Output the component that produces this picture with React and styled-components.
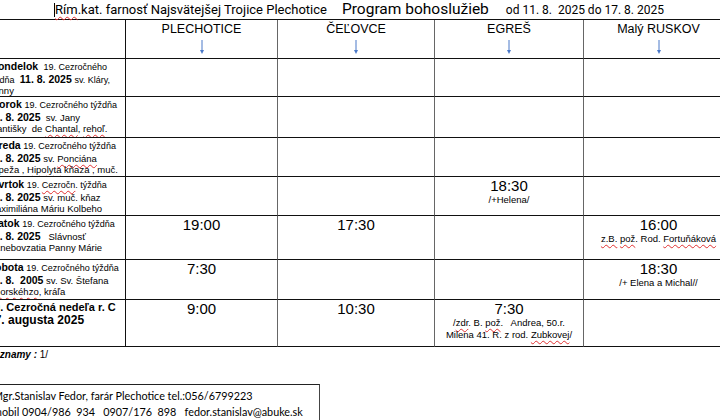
import React from 'react';
import styled, { createGlobalStyle } from 'styled-components';

const Global = createGlobalStyle`
  html, body { margin: 0; padding: 0; background: #fff; }
`;

const Page = styled.div`
  width: 720px;
  height: 420px;
  overflow: hidden;
  background: #fff;
  color: #000;
  font-family: "Liberation Sans", Arial, sans-serif;
`;

const TitleBar = styled.div`
  display: flex;
  align-items: baseline;
  height: 19px;
  padding-left: 54px;
  white-space: nowrap;
  font-family: Roboto, "Liberation Sans", sans-serif;
`;

const Parish = styled.span`
  font-size: 13px;
  border-left: 1px solid #000;
  line-height: 14px;
`;

const Program = styled.span`
  font-size: 15.5px;
  margin-left: 15px;
`;

const Dates = styled.span`
  font-size: 12px;
  margin-left: 17px;
`;

const Spell = styled.span`
  text-decoration: underline wavy #e03030;
  text-decoration-thickness: 1px;
  text-underline-offset: 2px;
`;

const Schedule = styled.div`
  display: grid;
  grid-template-columns: 138px 152px 157px 149px 150px;
  grid-template-rows: 39px 38px 41px 39px 39px 44px 40px 47px;
  width: max-content;
  margin-left: -12px;
  border-top: 1px solid #111;
`;

const Cell = styled.div`
  box-sizing: border-box;
  border-right: 1px solid ${(p) => (p.$first ? '#111' : '#666')};
  border-bottom: 1px solid #111;
  overflow: hidden;
  white-space: nowrap;
  display: flex;
  flex-direction: column;
  align-items: ${(p) => (p.$first ? 'flex-start' : 'center')};
  padding-top: 1px;
`;

const HeadCell = styled(Cell)`
  padding-top: 2px;
  font-size: 12.5px;
  line-height: 14px;
`;

const Arrow = styled.svg`
  margin-top: 4px;
  width: 6px;
  height: 15px;
`;

const Line = styled.div`
  line-height: 12.5px;
  height: 12.5px;
  font-size: 9.5px;
`;

const Day = styled.b`
  font-size: 10.5px;
`;

const Small = styled.span`
  font-size: 9px;
`;

const DateB = styled.b`
  font-size: ${(p) => p.$size || '10.5px'};
`;

const Sunday = styled.b`
  font-size: 11px;
`;

const Time = styled.div`
  font-size: 15px;
  line-height: 16px;
`;

const Note = styled.div`
  font-size: 9.5px;
  line-height: 12px;
`;

const Remarks = styled.div`
  height: 37px;
  margin-left: -13px;
  padding-top: 1px;
  font-size: 10px;
  line-height: 13px;
  box-sizing: border-box;
`;

const Footer = styled.div`
  width: 330px;
  margin-left: -10px;
  box-sizing: border-box;
  border-top: 1.5px solid #222;
  border-right: 1px solid #444;
  padding: 3px 0 0 3px;
  font-family: Lato, "Open Sans", sans-serif;
  font-size: 10.8px;
  line-height: 16px;
  white-space: pre;
  height: 40px;
`;

const places = ['PLECHOTICE', 'ČEĽOVCE', 'EGREŠ', 'Malý RUSKOV'];

const DownArrow = () => (
  <Arrow viewBox="0 0 6 15">
    <line x1="3" y1="0" x2="3" y2="12" stroke="#4a78c8" strokeWidth="1" />
    <path d="M1 10 L3 14 L5 10 Z" fill="#4a78c8" />
  </Arrow>
);

const days = [
  [
    <><Day>&nbsp;Pondelok</Day>&nbsp;&nbsp;<Small>19. Cezročného</Small></>,
    <><Small>týždňa</Small>&nbsp;&nbsp;<DateB>11. 8. 2025</DateB> <Small>sv. Kláry,</Small></>,
    <>panny</>,
  ],
  [
    <><Day>Utorok</Day> <Small>19. Cezročného týždňa</Small></>,
    <><DateB>12. 8. 2025</DateB>&nbsp;&nbsp;sv. Jany</>,
    <>Františky&nbsp;&nbsp;de <Spell>Chantal</Spell>, <Spell>rehoľ</Spell>.</>,
  ],
  [
    <><Day>Streda</Day> <Small>19. Cezročného týždňa</Small></>,
    <><DateB>13. 8. 2025</DateB> sv. <Spell>Ponciána</Spell></>,
    <>pápeža , <Spell>Hipolyta</Spell> kňaza , muč.</>,
  ],
  [
    <><Day>Štvrtok</Day> <Small>19. <Spell>Cezročn</Spell>. týždňa</Small></>,
    <><DateB>14. 8. 2025</DateB> sv. muč. kňaz</>,
    <>Maximiliána Máriu Kolbeho</>,
  ],
  [
    <><Day>Piatok</Day> <Small>19. Cezročného týždňa</Small></>,
    <><DateB>15. 8. 2025</DateB>&nbsp;&nbsp;&nbsp;Slávnosť</>,
    <>Nanebovzatia Panny Márie</>,
  ],
  [
    <><Day>Sobota</Day> <Small>19. Cezročného týždňa</Small></>,
    <><DateB>16. 8.&nbsp;&nbsp;2005</DateB> sv. Sv. Štefana</>,
    <><Spell>Uhorskéhzo</Spell>, kráľa</>,
  ],
  [
    <><Sunday>20. Cezročná nedeľa r. C</Sunday></>,
    <><DateB $size="12px">17. augusta 2025</DateB></>,
  ],
];

const masses = [
  [null, null, null, null],
  [null, null, null, null],
  [null, null, null, null],
  [null, null, { t: '18:30', n: ['/+Helena/'] }, null],
  [{ t: '19:00' }, { t: '17:30' }, null, { t: '16:00', n: [<><Spell>z.B.</Spell> <Spell>pož</Spell>. Rod. <Spell>Fortuňáková</Spell></>] }],
  [{ t: '7:30' }, null, null, { t: '18:30', n: ['/+ Elena a Michal//'] }],
  [
    { t: '9:00' },
    { t: '10:30' },
    { t: '7:30', n: [<>/<Spell>zdr</Spell>. B. <Spell>pož</Spell>.&nbsp;&nbsp; Andrea, 50.r.</>, <>Milena 41. R. z rod. <Spell>Zubkovej</Spell>/</>] },
    null,
  ],
];

export default function App() {
  return (
    <Page>
      <Global />
      <TitleBar>
        <Parish><Spell>Rím</Spell>.kat. farnosť Najsvätejšej Trojice Plechotice</Parish>
        <Program>Program bohoslužieb</Program>
        <Dates>od 11. 8.&nbsp; 2025 do 17. 8. 2025</Dates>
      </TitleBar>

      <Schedule>
        <HeadCell $first />
        {places.map((p) => (
          <HeadCell key={p}>
            {p}
            <DownArrow />
          </HeadCell>
        ))}

        {days.map((lines, i) => (
          <React.Fragment key={i}>
            <Cell $first>
              {lines.map((l, j) => (
                <Line key={j}>{l}</Line>
              ))}
            </Cell>
            {masses[i].map((m, k) => (
              <Cell key={k}>
                {m && <Time>{m.t}</Time>}
                {m && m.n && m.n.map((n, q) => <Note key={q}>{n}</Note>)}
              </Cell>
            ))}
          </React.Fragment>
        ))}
      </Schedule>

      <Remarks>
        <b><i>Poznamy :</i></b> 1/
      </Remarks>

      <Footer>
        {'Mgr.Stanislav Fedor, farár Plechotice tel.:056/6799223\nmobil 0904/986  934   0907/176  898   fedor.stanislav@abuke.sk'}
      </Footer>
    </Page>
  );
}
